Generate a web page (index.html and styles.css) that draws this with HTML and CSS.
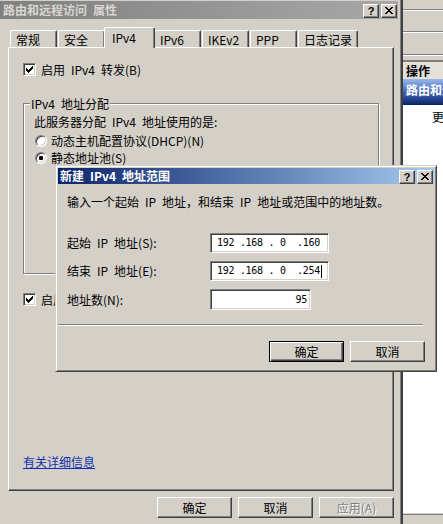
FILE: index.html
```html
<!DOCTYPE html>
<html>
<head>
<meta charset="utf-8">
<link rel="stylesheet" href="styles.css">
</head>
<body>
<div class="screen">
  <div class="dlg">
    <div class="titlebar inactive">
      <span class="ttext">路由和远程访问 属性</span>
      <span class="tbtns">
        <span class="tbtn">?</span>
        <span class="tbtn"><svg width="8" height="7" viewBox="0 0 8 7"><path d="M0 0h2v1h-2zM6 0h2v1h-2zM1 1h2v1h-2zM5 1h2v1h-2zM2 2h4v1h-4zM3 3h2v1h-2zM2 4h4v1h-4zM1 5h2v1h-2zM5 5h2v1h-2zM0 6h2v1h-2zM6 6h2v1h-2z" fill="#000"/></svg></span>
      </span>
    </div>
    <div class="tabs">
      <span class="tab">常规</span>
      <span class="tab">安全</span>
      <span class="tab sel">IPv4</span>
      <span class="tab">IPv6</span>
      <span class="tab">IKEv2</span>
      <span class="tab">PPP</span>
      <span class="tab wide">日志记录</span>
    </div>
    <div class="panel">
      <div class="check">
        <span class="cb"><svg width="7" height="7" viewBox="0 0 7 7"><path d="M6 0h1v1h-1zM5 1h2v1h-2zM0 2h1v1h-1zM4 2h3v1h-3zM0 3h2v1h-2zM3 3h3v1h-3zM0 4h5v1h-5zM1 5h3v1h-3zM2 6h1v1h-1z" fill="#000"/></svg></span>
        <span>启用 IPv4 转发(B)</span>
      </div>
      <div class="group">
        <div class="legend">IPv4 地址分配</div>
        <div class="gtext">此服务器分配 IPv4 地址使用的是:</div>
        <div class="radio first"><span class="rb"></span><span>动态主机配置协议(DHCP)(N)</span></div>
        <div class="radio"><span class="rb on"></span><span>静态地址池(S)</span></div>
      </div>
      <div class="check check2">
        <span class="cb"><svg width="7" height="7" viewBox="0 0 7 7"><path d="M6 0h1v1h-1zM5 1h2v1h-2zM0 2h1v1h-1zM4 2h3v1h-3zM0 3h2v1h-2zM3 3h3v1h-3zM0 4h5v1h-5zM1 5h3v1h-3zM2 6h1v1h-1z" fill="#000"/></svg></span>
        <span>启用广播名称解析(A)</span>
      </div>
      <a class="link">有关详细信息</a>
    </div>
    <div class="btnrow">
      <span class="btn">确定</span>
      <span class="btn">取消</span>
      <span class="btn disabled">应用(A)</span>
    </div>
  </div>

  <div class="mmc">
    <div class="mmc-top">
      <div class="mmc-line l1"></div>
      <div class="mmc-line l2"></div>
      <div class="mmc-line l3"></div>
    </div>
    <div class="mmc-hd">操作</div>
    <div class="mmc-bar">路由和远程访问</div>
    <div class="mmc-body"><span class="more">更多操作</span></div>
    <div class="mmc-sb"></div>
  </div>

  <div class="sub">
    <div class="titlebar active">
      <span class="ttext">新建 IPv4 地址范围</span>
      <span class="tbtns">
        <span class="tbtn">?</span>
        <span class="tbtn"><svg width="8" height="7" viewBox="0 0 8 7"><path d="M0 0h2v1h-2zM6 0h2v1h-2zM1 1h2v1h-2zM5 1h2v1h-2zM2 2h4v1h-4zM3 3h2v1h-2zM2 4h4v1h-4zM1 5h2v1h-2zM5 5h2v1h-2zM0 6h2v1h-2zM6 6h2v1h-2z" fill="#000"/></svg></span>
      </span>
    </div>
    <div class="sub-body">
      <div class="intro">输入一个起始 IP 地址，和结束 IP 地址或范围中的地址数。</div>
      <div class="fields">
        <span class="flabel">起始 IP 地址(S):</span>
        <div class="input ip">192 .168 . 0  .160</div>
        <span class="flabel">结束 IP 地址(E):</span>
        <div class="input ip">192 .168 . 0  .254<span class="caret"></span></div>
        <span class="flabel">地址数(N):</span>
        <div class="input count">95</div>
      </div>
      <div class="sep"></div>
      <div class="subbtns">
        <span class="btn default">确定</span>
        <span class="btn">取消</span>
      </div>
    </div>
  </div>
</div>
</body>
</html>
```

FILE: styles.css
```css
* { box-sizing: border-box; }
html, body { margin: 0; padding: 0; }
body {
  width: 443px;
  height: 524px;
  overflow: hidden;
  background: #d4d0c8;
  color: #000;
  font-family: "Noto Sans CJK SC", "Liberation Sans", sans-serif;
  font-size: 12px;
  line-height: 14px;
  word-spacing: 3.3px;
}
.screen {
  position: relative;
  width: 443px;
  height: 524px;
  display: flex;
}

/* ---------- main dialog ---------- */
.dlg {
  width: 403px;
  height: 524px;
  flex: none;
  display: flex;
  flex-direction: column;
  padding: 1px 5px 0 0;
  background: #d4d0c8;
  box-shadow: inset -1px 0 #404040, inset -2px 0 #404040, inset -3px 0 #808080;
}
.titlebar {
  height: 18px;
  display: flex;
  align-items: flex-start;
  justify-content: space-between;
  flex: none;
}
.titlebar.inactive {
  background: linear-gradient(to right, #808080, #a8a8a8);
}
.titlebar.active {
  background: linear-gradient(to right, #0a246a, #a6caf0);
  height: 16px;
}
.ttext {
  font-weight: bold;
  color: #fff;
  padding-left: 3px;
  line-height: 18px;
  white-space: nowrap;
}
.inactive .ttext { color: #d8d6d0; }
.active .ttext { line-height: 16px; padding-left: 2px; }
.tbtns {
  display: flex;
  gap: 2px;
  margin-top: 3px;
  padding-right: 1px;
}
.active .tbtns { margin-top: 2px; padding-right: 1px; }
.tbtn {
  width: 16px;
  height: 14px;
  background: #d4d0c8;
  border-top: 1px solid #fff;
  border-left: 1px solid #fff;
  border-right: 1px solid #404040;
  border-bottom: 1px solid #404040;
  box-shadow: inset -1px -1px #808080;
  display: flex;
  align-items: center;
  justify-content: center;
  font: bold 11px/12px "Liberation Sans", sans-serif;
  color: #000;
  padding-bottom: 1px;
}

/* tabs */
.tabs {
  margin-top: 8px;
  height: 20px;
  padding-left: 10px;
  display: flex;
  align-items: flex-end;
  flex: none;
}
.tab {
  width: 47px;
  height: 17px;
  margin-right: 1px;
  padding: 2px 0 0 5px;
  border-top: 1px solid #fff;
  border-left: 1px solid #fff;
  border-right: 1px solid #404040;
  border-radius: 2px 2px 0 0;
  box-shadow: inset -1px 0 #808080;
  background: #d4d0c8;
  white-space: nowrap;
  line-height: 14px;
}
.tab.sel {
  width: 51px;
  height: 21px;
  margin-left: -2px;
  margin-right: -1px;
  margin-bottom: -1px;
  padding-top: 3px;
  padding-left: 7px;
  position: relative;
  z-index: 1;
}
.tab.wide { width: 60px; }

/* panel */
.panel {
  margin-left: 8px;
  width: 386px;
  height: 444px;
  flex: none;
  border-top: 1px solid #fff;
  border-left: 1px solid #fff;
  border-right: 1px solid #404040;
  border-bottom: 1px solid #404040;
  box-shadow: inset -1px -1px #808080;
  padding: 15px 0 21px 14px;
  display: flex;
  flex-direction: column;
  align-items: flex-start;
}
.check {
  display: flex;
  align-items: center;
  gap: 5px;
  height: 13px;
  white-space: nowrap;
}
.cb {
  width: 13px;
  height: 13px;
  flex: none;
  background: #fff;
  border: 1px solid;
  border-color: #808080 #fff #fff #808080;
  box-shadow: inset 1px 1px #404040, inset -1px -1px #d4d0c8;
  padding: 2px 0 0 2px;
  display: flex;
}
.check2 { margin-top: 19px; }

.group {
  margin-top: 27px;
  width: 356px;
  height: 171px;
  border: 1px solid #808080;
  box-shadow: inset 1px 1px #fff, 1px 1px #fff;
  padding: 0 0 0 10px;
}
.legend {
  margin: -7px 0 0 -4px;
  padding: 0 1px;
  width: max-content;
  background: #d4d0c8;
  line-height: 14px;
}
.gtext { margin-top: 4px; white-space: nowrap; }
.radio {
  display: flex;
  align-items: center;
  gap: 4px;
  height: 12px;
  margin-top: 5px;
  margin-left: 1px;
  white-space: nowrap;
}
.radio.first { margin-top: 6px; }
.rb {
  width: 12px;
  height: 12px;
  flex: none;
  border-radius: 50%;
  background: #fff;
  border: 1px solid;
  border-color: #808080 #fff #fff #808080;
  box-shadow: inset 1px 1px #404040, inset -1px -1px #d4d0c8;
  display: flex;
  align-items: center;
  justify-content: center;
}
.rb.on::after {
  content: "";
  width: 4px;
  height: 4px;
  border-radius: 1px;
  background: #000;
}
.link {
  margin-top: auto;
  color: #1030b0;
  text-decoration: underline;
  line-height: 14px;
}

/* buttons */
.btnrow {
  margin-top: 6px;
  margin-left: 8px;
  width: 386px;
  display: flex;
  justify-content: flex-end;
  gap: 6px;
  flex: none;
}
.btn {
  width: 75px;
  height: 21px;
  background: #d4d0c8;
  border-top: 1px solid #fff;
  border-left: 1px solid #fff;
  border-right: 1px solid #404040;
  border-bottom: 1px solid #404040;
  box-shadow: inset -1px -1px #808080;
  display: flex;
  align-items: center;
  justify-content: center;
  line-height: 14px;
  white-space: nowrap;
}
.btn.disabled {
  color: #808080;
  text-shadow: 1px 1px #fff;
}
.btn.default {
  border: 1px solid #000;
  box-shadow: inset 1px 1px #fff, inset -1px -1px #404040, inset -2px -2px #808080;
}

/* ---------- MMC behind ---------- */
.mmc {
  flex: 1;
  min-width: 0;
  height: 524px;
  display: flex;
  flex-direction: column;
  overflow: hidden;
  white-space: nowrap;
  background: #d4d0c8;
}
.mmc-top {
  height: 62px;
  flex: none;
  display: flex;
  flex-direction: column;
  border-bottom: 2px solid #808080;
}
.mmc-line { height: 2px; flex: none; border-top: 1px solid #808080; border-bottom: 1px solid #fff; }
.mmc-line.l1 { margin-top: 9px; }
.mmc-line.l2 { margin-top: 20px; }
.mmc-line.l3 { margin-top: 21px; }
.mmc-hd {
  height: 17px;
  flex: none;
  font-weight: bold;
  padding-left: 3px;
  line-height: 17px;
  background: #e4e1da;
}
.mmc-bar {
  height: 26px;
  flex: none;
  background: linear-gradient(to bottom, #9ab8ec 0%, #4a6fc0 45%, #0a246a 100%);
  color: #fff;
  font-weight: bold;
  padding-left: 3px;
  line-height: 22px;
}
.mmc-body {
  flex: 1;
  background: #fff;
  padding: 5px 0 0 29px;
}
.mmc-sb {
  height: 11px;
  flex: none;
  border-top: 1px solid #d4d0c8;
  box-shadow: inset 0 1px #808080;
  background: #d4d0c8;
}

/* ---------- sub dialog (overlay) ---------- */
.sub {
  position: absolute;
  left: 55px;
  top: 165px;
  width: 382px;
  height: 207px;
  background: #d4d0c8;
  border: 1px solid;
  border-color: #d4d0c8 #404040 #404040 #d4d0c8;
  box-shadow: inset 1px 1px #fff, inset -1px -1px #808080;
  padding: 2px;
  display: flex;
  flex-direction: column;
  z-index: 5;
}
.sub-body {
  padding: 11px 9px 0 9px;
  display: flex;
  flex-direction: column;
}
.intro { white-space: nowrap; }
.fields {
  margin-top: 24px;
  display: grid;
  grid-template-columns: 143px auto;
  row-gap: 8px;
  align-items: center;
}
.flabel { white-space: nowrap; }
.input {
  height: 20px;
  background: #fff;
  border: 1px solid;
  border-color: #808080 #fff #fff #808080;
  box-shadow: inset 1px 1px #404040, inset -1px -1px #d4d0c8;
  font: 10px/16px "DejaVu Sans Mono", monospace;
  letter-spacing: -0.3px;
  word-spacing: 0;
  white-space: pre;
}
.input.ip {
  width: 119px;
  display: flex;
  align-items: center;
  padding-left: 6px;
}
.input.count {
  width: 101px;
  height: 21px;
  text-align: right;
  padding: 2px 3px 0 0;
}
.ip .caret {
  width: 1px;
  height: 13px;
  background: #000;
  margin-left: 1px;
}
.sep {
  margin: 14px 0 0 -9px;
  width: 365px;
  height: 2px;
  border-top: 1px solid #808080;
  border-bottom: 1px solid #fff;
}
.subbtns {
  margin-top: 15px;
  display: flex;
  justify-content: flex-end;
  gap: 6px;
}
```
